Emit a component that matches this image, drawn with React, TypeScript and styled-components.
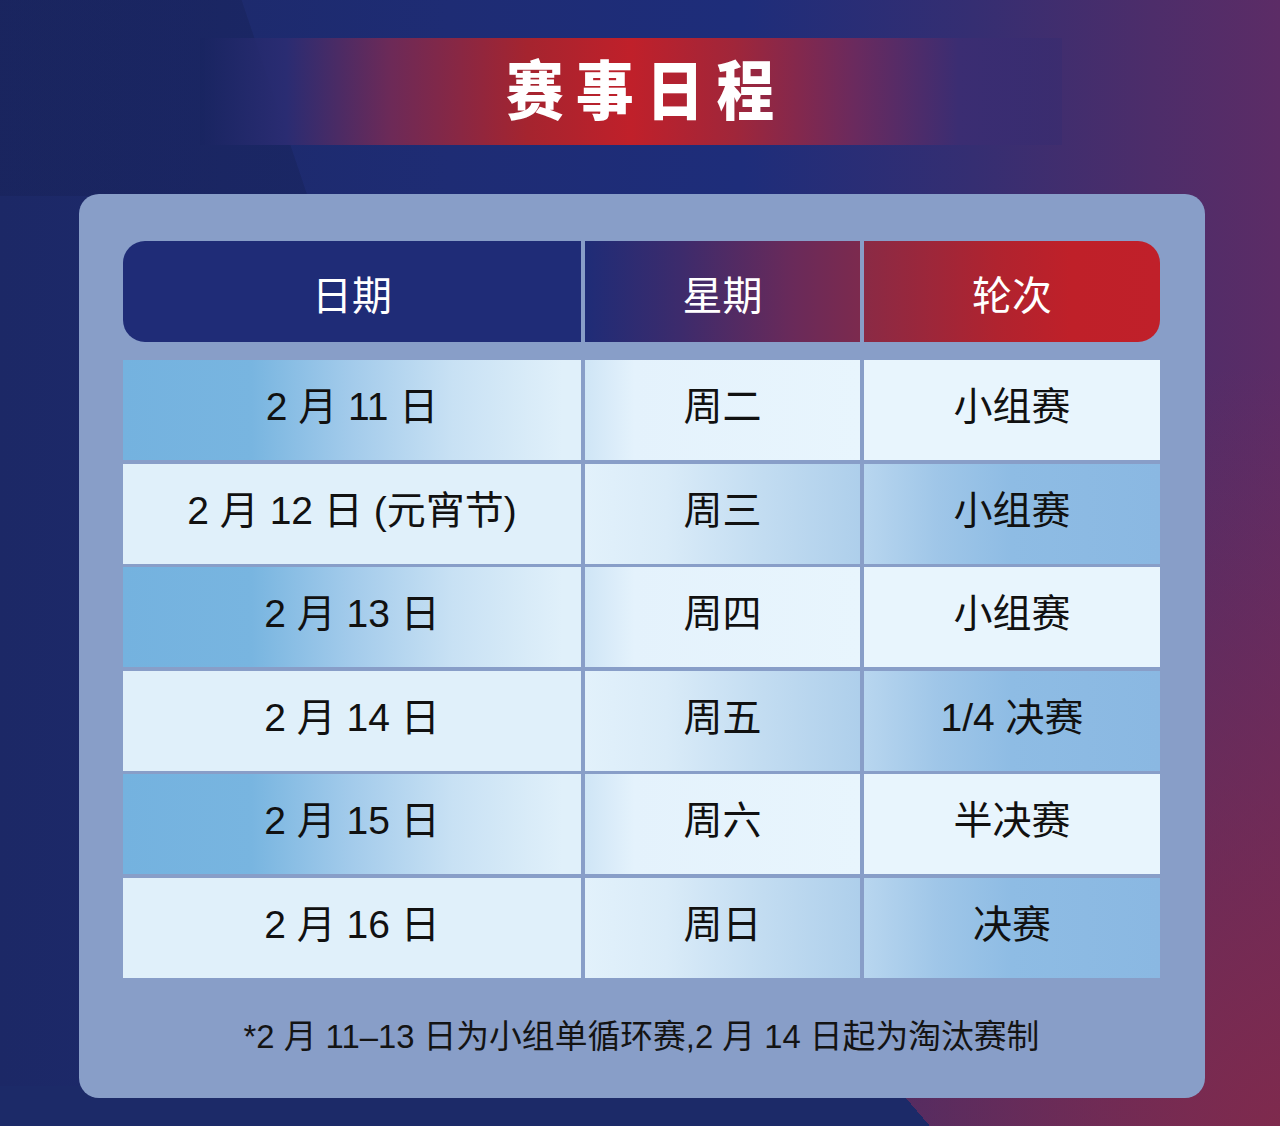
import React from 'react';
import styled, { createGlobalStyle } from 'styled-components';

const GlobalStyle = createGlobalStyle`
  html, body {
    margin: 0;
    padding: 0;
  }
  body {
    background: #1c2a68;
    font-family: "Liberation Sans", "Noto Sans CJK SC", sans-serif;
  }
`;

const Page = styled.div`
  width: 1280px;
  height: 1126px;
  overflow: hidden;
  display: flex;
  flex-direction: column;
  align-items: center;
  padding-top: 38px;
  box-sizing: border-box;
  background:
    linear-gradient(71.4deg, rgba(22, 32, 84, 0.4) 291px, transparent 292px) top / 100% 196px no-repeat,
    linear-gradient(49.4deg, #1c2a68 706px, transparent 706px) bottom / 100% 40px no-repeat,
    radial-gradient(circle at 100% 100%, rgba(128, 42, 76, 0.95) 0, rgba(128, 42, 76, 0.55) 320px, rgba(128, 42, 76, 0) 760px),
    linear-gradient(90deg, #1c2866 0%, #1e2c74 35%, #1e2d7a 58%, #352e72 76%, #4d2d6a 90%, #5c2c66 100%);
`;

const Banner = styled.div`
  width: 862px;
  height: 107px;
  margin-right: 18px;
  display: flex;
  align-items: center;
  justify-content: center;
  background: linear-gradient(
    90deg,
    rgba(24, 36, 96, 0.6) 0%,
    #2a2c72 10%,
    #6c2a58 22%,
    #a5242f 38%,
    #c0202a 50%,
    #a0263a 62%,
    #6a2a5e 76%,
    #3b2d72 88%,
    rgba(54, 44, 112, 0.5) 100%
  );
`;

const Title = styled.h1`
  margin: 0 0 12px 18px;
  color: #ffffff;
  font-family: "Noto Sans CJK SC", sans-serif;
  font-weight: 900;
  font-size: 64px;
  line-height: 1;
  letter-spacing: 14px;
  padding-left: 14px;
  transform: scaleX(0.9);
`;

const Panel = styled.div`
  margin-top: 49px;
  margin-left: 4px;
  width: 1126px;
  height: 904px;
  box-sizing: border-box;
  padding: 47px 45px 0 44px;
  border-radius: 20px;
  background: #889ec8;
  display: flex;
  flex-direction: column;
`;

const columns = '458px 275px 296px';

const HeaderRow = styled.div`
  display: grid;
  grid-template-columns: ${columns};
  column-gap: 4px;
  height: 101px;
`;

type Tone = 'navy' | 'blend' | 'red';

const headerBg: Record<Tone, string> = {
  navy: '#1f2c77',
  blend: 'linear-gradient(90deg, #1f2c77 0%, #3d2b6c 35%, #692a5a 75%, #7c2a4e 100%)',
  red: 'linear-gradient(90deg, #8a2a45 0%, #b0232f 45%, #bf2029 70%, #c0202a 100%)',
};

const HeaderCell = styled.div<{ $tone: Tone }>`
  display: flex;
  align-items: center;
  justify-content: center;
  padding-top: 3px;
  box-sizing: border-box;
  color: #ffffff;
  font-family: "Noto Sans CJK SC", sans-serif;
  font-size: 40px;
  background: ${(p) => headerBg[p.$tone]};
  border-radius: ${(p) =>
    p.$tone === 'navy' ? '22px 0 0 22px' : p.$tone === 'red' ? '0 22px 22px 0' : '0'};
`;

const Body = styled.div`
  margin-top: 18px;
  display: flex;
  flex-direction: column;
  gap: 3.5px;
`;

const Row = styled.div`
  display: grid;
  grid-template-columns: ${columns};
  column-gap: 4px;
  height: 100px;
`;

type Fill = 'dateDeep' | 'dateLight' | 'dayLight' | 'dayDeep' | 'roundLight' | 'roundDeep';

const cellBg: Record<Fill, string> = {
  dateDeep: 'linear-gradient(90deg, #74b2df 0%, #78b5e0 28%, #a3cbeb 50%, #c8e1f4 72%, #e0f0fa 96%)',
  dateLight: '#e0f0fa',
  dayLight: 'linear-gradient(90deg, #cfe5f6 0%, #e4f2fc 18%, #e8f5fd 100%)',
  dayDeep: 'linear-gradient(90deg, #e2f1fb 0%, #d9ebf8 30%, #c2dcf1 65%, #aecfeb 100%)',
  roundLight: '#e8f5fd',
  roundDeep: 'linear-gradient(90deg, #b8d6ef 0%, #9fc6e8 25%, #8ebce4 50%, #8ab8e2 100%)',
};

const Cell = styled.div<{ $fill: Fill }>`
  display: flex;
  align-items: center;
  justify-content: center;
  padding-bottom: 14px;
  box-sizing: border-box;
  color: #111111;
  font-size: 39px;
  white-space: pre;
  background: ${(p) => cellBg[p.$fill]};
`;

const Footnote = styled.p`
  margin: 39px 0 0;
  text-align: center;
  color: #141414;
  font-size: 32.8px;
  line-height: 40px;
`;

const schedule = [
  { date: '2 月 11 日', day: '周二', round: '小组赛' },
  { date: '2 月 12 日 (元宵节)', day: '周三', round: '小组赛' },
  { date: '2 月 13 日', day: '周四', round: '小组赛' },
  { date: '2 月 14 日', day: '周五', round: '1/4 决赛' },
  { date: '2 月 15 日', day: '周六', round: '半决赛' },
  { date: '2 月 16 日', day: '周日', round: '决赛' },
];

const App: React.FC = () => {
  return (
    <>
      <GlobalStyle />
      <Page>
        <Banner>
          <Title>赛事日程</Title>
        </Banner>
        <Panel>
          <HeaderRow>
            <HeaderCell $tone="navy">日期</HeaderCell>
            <HeaderCell $tone="blend">星期</HeaderCell>
            <HeaderCell $tone="red">轮次</HeaderCell>
          </HeaderRow>
          <Body>
            {schedule.map((item, i) => {
              const deep = i % 2 === 0;
              return (
                <Row key={item.date}>
                  <Cell $fill={deep ? 'dateDeep' : 'dateLight'}>{item.date}</Cell>
                  <Cell $fill={deep ? 'dayLight' : 'dayDeep'}>{item.day}</Cell>
                  <Cell $fill={deep ? 'roundLight' : 'roundDeep'}>{item.round}</Cell>
                </Row>
              );
            })}
          </Body>
          <Footnote>*2 月 11–13 日为小组单循环赛,2 月 14 日起为淘汰赛制</Footnote>
        </Panel>
      </Page>
    </>
  );
};

export default App;
